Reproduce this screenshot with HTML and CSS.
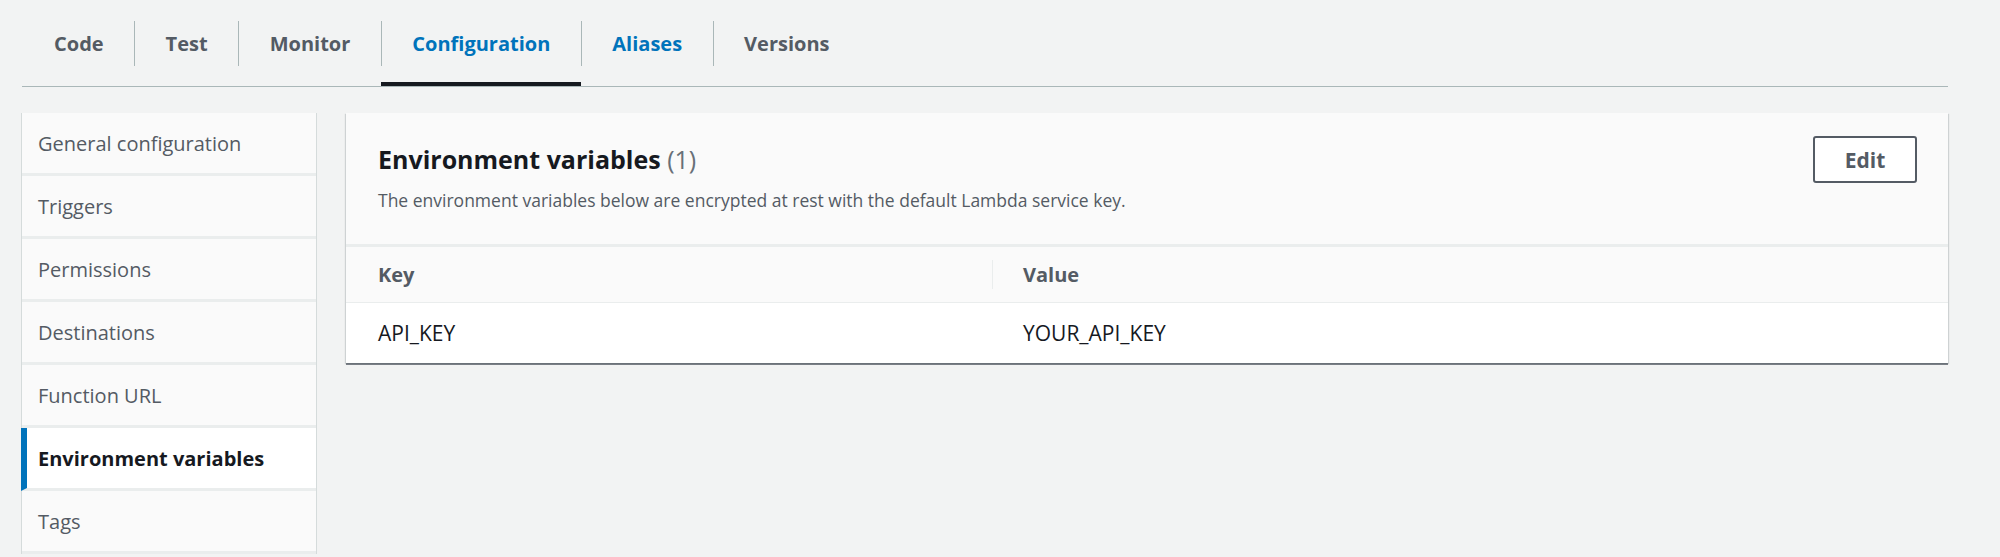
FILE: index.html
```html
<!DOCTYPE html>
<html lang="en">

<head>
  <meta charset="UTF-8">
  <meta name="viewport" content="width=device-width, initial-scale=1.0">
  <title>Lambda - Configuration</title>
  <link rel="stylesheet" href="styles.css">
</head>

<body>
  <div class="page">
    <div class="tabs">
      <a class="tab" href="#"><span class="tab-label">Code</span></a>
      <a class="tab" href="#"><span class="tab-label">Test</span></a>
      <a class="tab" href="#"><span class="tab-label">Monitor</span></a>
      <a class="tab active" href="#"><span class="tab-label">Configuration</span></a>
      <a class="tab link" href="#"><span class="tab-label">Aliases</span></a>
      <a class="tab" href="#"><span class="tab-label">Versions</span></a>
    </div>

    <div class="layout">
      <div class="side-nav">
        <a href="#" class="side-item">General configuration</a>
        <a href="#" class="side-item">Triggers</a>
        <a href="#" class="side-item">Permissions</a>
        <a href="#" class="side-item">Destinations</a>
        <a href="#" class="side-item">Function URL</a>
        <a href="#" class="side-item active">Environment variables</a>
        <a href="#" class="side-item">Tags</a>
      </div>

      <div class="panel-wrap">
        <div class="panel">
          <div class="panel-header">
            <div class="panel-heading">
              <h2 class="panel-title">Environment variables <span class="counter">(1)</span></h2>
              <p class="panel-desc">The environment variables below are encrypted at rest with the default Lambda service key.</p>
            </div>
            <button class="btn">Edit</button>
          </div>

          <div class="env-table">
            <div class="row head">
              <div class="cell">Key</div>
              <div class="cell"><span class="divider">Value</span></div>
            </div>
            <div class="row">
              <div class="cell">API_KEY</div>
              <div class="cell value">YOUR_API_KEY</div>
            </div>
          </div>
        </div>
      </div>
    </div>
  </div>
</body>

</html>
```

FILE: styles.css
```css
body {
  margin: 0;
  font-family: "Open Sans", "Liberation Sans", sans-serif;
  background-color: #f2f3f3;
  color: #16191f;
  overflow: hidden;
}

a {
  text-decoration: none;
}

.page {
  padding: 0 52px 0 21px;
}

/* top tabs */

.tabs {
  display: flex;
  border-bottom: 1px solid #aab7b8;
  margin-left: 1px;
}

.tab {
  display: flex;
  align-items: center;
  height: 86px;
  box-sizing: border-box;
  padding-top: 4px;
  border-bottom: 4px solid transparent;
  color: #545b64;
  font-weight: 700;
  font-size: 20px;
}

.tab-label {
  display: block;
  height: 45px;
  line-height: 45px;
  padding: 0 30.5px;
  border-left: 1px solid #aab7b8;
}

.tab:first-child .tab-label {
  border-left: none;
  padding-left: 32px;
}

.tab.active {
  border-bottom-color: #16191f;
  color: #0073bb;
}

.tab.link {
  color: #0073bb;
}

/* side navigation + content */

.layout {
  display: flex;
  gap: 29px;
  margin-top: 26px;
}

.side-nav {
  width: 294px;
  flex-shrink: 0;
  border-left: 1px solid #d5dbdb;
  border-right: 1px solid #d5dbdb;
  display: flex;
  flex-direction: column;
}

.side-item {
  display: flex;
  align-items: center;
  height: 60px;
  flex-shrink: 0;
  padding-left: 16px;
  background-color: #fafafa;
  border-bottom: 3px solid #eaeded;
  color: #545b64;
  font-size: 20px;
}

.side-item.active {
  background-color: #ffffff;
  color: #16191f;
  font-weight: 700;
  margin-left: -1px;
  padding-left: 11px;
  border-left: 6px solid #0073bb;
}

.panel-wrap {
  flex: 1;
}

.panel {
  background-color: #ffffff;
  box-shadow: 0 2px 0 0 rgba(84, 91, 100, 0.75), 1px 1px 1px 0 rgba(0, 28, 36, 0.15), -1px 1px 1px 0 rgba(0, 28, 36, 0.15);
}

.panel-header {
  display: flex;
  justify-content: space-between;
  align-items: flex-start;
  padding: 23px 31px 32px 32px;
  background-color: #fafafa;
  border-bottom: 3px solid #eaeded;
}

.panel-title {
  margin: 8px 0 0;
  font-size: 25px;
  line-height: 30px;
  font-weight: 700;
}

.panel-title .counter {
  font-weight: 400;
  color: #687078;
}

.panel-desc {
  margin: 14px 0 0;
  font-size: 17.5px;
  line-height: 24px;
  color: #545b64;
}

.btn {
  width: 104px;
  height: 47px;
  background-color: #ffffff;
  border: 2px solid #545b64;
  border-radius: 3px;
  color: #545b64;
  font-family: inherit;
  font-size: 21px;
  font-weight: 700;
  cursor: pointer;
}

/* env table */

.row {
  display: grid;
  grid-template-columns: 646px 1fr;
  height: 60px;
  align-items: center;
  background-color: #ffffff;
  font-size: 21px;
}

.row.head {
  height: 55px;
  background-color: #fafafa;
  border-bottom: 1px solid #eaeded;
  color: #545b64;
  font-size: 20px;
  font-weight: 700;
}

.cell {
  padding-left: 32px;
}

.cell + .cell {
  padding-left: 0;
}

.cell.value {
  padding-left: 31px;
}

.divider {
  display: block;
  height: 29px;
  line-height: 29px;
  padding-left: 30px;
  border-left: 1px solid #eaeded;
}
```
